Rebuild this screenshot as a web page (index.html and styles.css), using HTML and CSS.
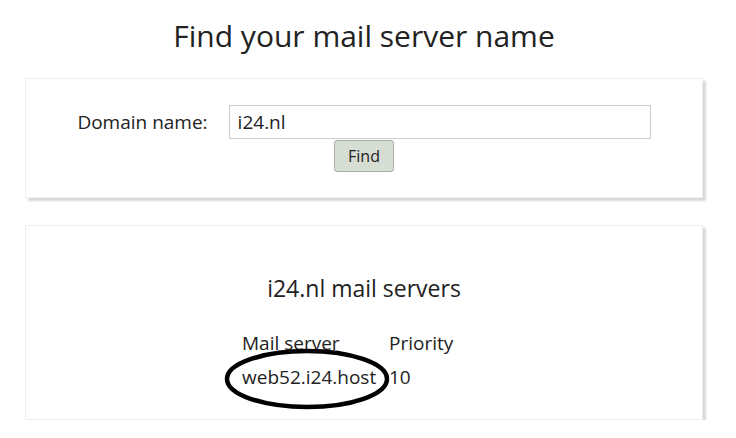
FILE: index.html
```html
<!DOCTYPE html>
<html lang="en">
    <head>
        <meta charset="UTF-8" />
        <title>Find your mail server name</title>
        <link rel="stylesheet" href="styles.css">
    </head>
    <body>
        <div class="container">
            <h1 class="title">Find your mail server name</h1>
            <form class="card search">
                <div class="row">
                    <label for="domain">Domain name:</label>
                    <input id="domain" type="text" value="i24.nl" />
                </div>
                <button type="button" class="btn">Find</button>
            </form>
            <div class="card results">
                <h2 class="subtitle">i24.nl mail servers</h2>
                <table class="servers">
                    <thead>
                        <tr>
                            <th>Mail server</th>
                            <th>Priority</th>
                        </tr>
                    </thead>
                    <tbody>
                        <tr>
                            <td class="host">
                                web52.i24.host
                                <svg class="circle" width="168" height="62" viewBox="0 0 168 62">
                                    <ellipse cx="84" cy="31" rx="80" ry="28" fill="none" stroke="#000" stroke-width="4.5"></ellipse>
                                </svg>
                            </td>
                            <td>10</td>
                        </tr>
                    </tbody>
                </table>
            </div>
        </div>
    </body>
</html>
```

FILE: styles.css
```css
*,
*::before,
*::after {
    box-sizing: border-box;
}

body {
    margin: 0;
    background: #fff;
    color: #222;
    font-family: "Open Sans", "Noto Sans", sans-serif;
}

.container {
    width: 678px;
    margin: 0 25px;
    padding-top: 16px;
}

.title {
    margin: 0 0 22px;
    font-size: 30px;
    font-weight: 400;
    text-align: center;
    line-height: 40px;
}

.card {
    background: #fff;
    border: 1px solid #eee;
    box-shadow: 3px 3px 2px #d8d8d8;
}

.search {
    display: flex;
    flex-direction: column;
    align-items: center;
    padding: 26px 0 25px;
    margin-bottom: 27px;
}

.search .row {
    display: flex;
    align-items: center;
    gap: 21px;
}

.search label {
    font-size: 19px;
}

.search input {
    width: 422px;
    height: 34px;
    padding: 0 8px;
    border: 1px solid #ccc;
    font: inherit;
    font-size: 19px;
    color: #222;
}

.btn {
    margin-top: 1px;
    height: 32px;
    padding: 0 13px;
    background: #d6ddd2;
    border: 1px solid #a9aea6;
    border-radius: 3px;
    font: inherit;
    font-size: 16px;
    color: #222;
}

.results {
    padding: 46px 0 25px;
    text-align: center;
}

.subtitle {
    margin: 0 0 22px;
    font-size: 23px;
    font-weight: 400;
    line-height: 32px;
}

.servers {
    margin: 0 0 0 216px;
    border-collapse: collapse;
    font-size: 19px;
    line-height: 26px;
    text-align: left;
}

.servers th,
.servers td {
    padding: 4px 0;
    font-weight: 400;
}

.servers th:first-child,
.servers td:first-child {
    padding-right: 10px;
    width: 147px;
}

.host {
    position: relative;
}

.circle {
    position: absolute;
    left: -19px;
    top: -12px;
}
```
